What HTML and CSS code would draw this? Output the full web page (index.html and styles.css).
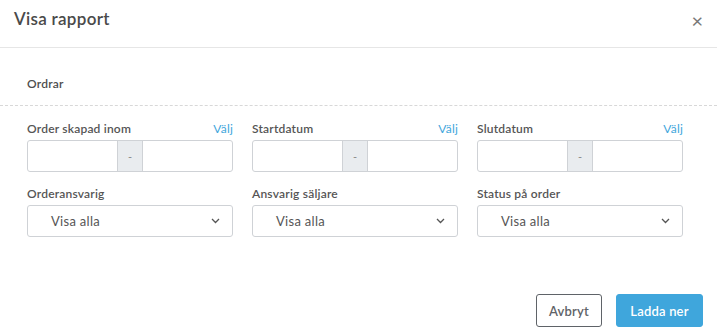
FILE: index.html
```html
<!DOCTYPE html>
<html lang="sv">
<head>
<meta charset="utf-8">
<link rel="stylesheet" href="styles.css">
</head>
<body>
<div class="modal">
  <div class="modal-header">
    <h1 class="title">Visa rapport</h1>
    <span class="close">&times;</span>
  </div>
  <div class="section-title">Ordrar</div>
  <div class="form">
    <div class="field">
      <div class="label-row"><span class="label">Order skapad inom</span><span class="pick">Välj</span></div>
      <div class="range"><span class="range-input"></span><span class="range-sep">-</span><span class="range-input"></span></div>
    </div>
    <div class="field">
      <div class="label-row"><span class="label">Startdatum</span><span class="pick">Välj</span></div>
      <div class="range"><span class="range-input"></span><span class="range-sep">-</span><span class="range-input"></span></div>
    </div>
    <div class="field">
      <div class="label-row"><span class="label">Slutdatum</span><span class="pick">Välj</span></div>
      <div class="range"><span class="range-input"></span><span class="range-sep">-</span><span class="range-input"></span></div>
    </div>
    <div class="field">
      <div class="label-row"><span class="label">Orderansvarig</span></div>
      <div class="select"><span>Visa alla</span><svg class="chev" width="9" height="6" viewBox="0 0 9 6"><path d="M1 1l3.5 3.5L8 1" fill="none" stroke="#555" stroke-width="1.3"/></svg></div>
    </div>
    <div class="field">
      <div class="label-row"><span class="label">Ansvarig säljare</span></div>
      <div class="select"><span>Visa alla</span><svg class="chev" width="9" height="6" viewBox="0 0 9 6"><path d="M1 1l3.5 3.5L8 1" fill="none" stroke="#555" stroke-width="1.3"/></svg></div>
    </div>
    <div class="field">
      <div class="label-row"><span class="label">Status på order</span></div>
      <div class="select"><span>Visa alla</span><svg class="chev" width="9" height="6" viewBox="0 0 9 6"><path d="M1 1l3.5 3.5L8 1" fill="none" stroke="#555" stroke-width="1.3"/></svg></div>
    </div>
  </div>
  <div class="footer">
    <button class="btn btn-secondary">Avbryt</button>
    <button class="btn btn-primary">Ladda ner</button>
  </div>
</div>
</body>
</html>
```
FILE: styles.css
```css
* { box-sizing: border-box; }
html, body { margin: 0; padding: 0; background: #fff; }
body { font-family: Lato, "Open Sans", sans-serif; color: #4b4b4b; }
.modal { width: 717px; height: 336px; }
.modal-header {
  height: 48px;
  border-bottom: 1px solid #e6e6e6;
  display: flex;
  align-items: center;
  justify-content: space-between;
  padding: 0 14px 0 14px;
}
.title { margin: 0; font-size: 17px; font-weight: 600; color: #4a4a4a; letter-spacing: 0.3px; padding-bottom: 10px; }
.close { font-size: 20px; color: #777; line-height: 1; padding-bottom: 8px; }
.section-title {
  height: 58px;
  padding: 28px 0 0 27px;
  font-size: 12px;
  font-weight: 600;
  color: #4d4d4d;
  letter-spacing: 0.2px;
  border-bottom: 1px dashed #d8d8d8;
}
.form {
  display: grid;
  grid-template-columns: repeat(3, 206px);
  column-gap: 19px;
  row-gap: 14px;
  padding: 15px 0 0 27px;
}
.label-row { display: flex; justify-content: space-between; align-items: baseline; height: 19px; }
.label { font-size: 12px; font-weight: 600; color: #555; letter-spacing: 0.2px; }
.pick { font-size: 12px; color: #3fa6dc; letter-spacing: 0.2px; }
.range {
  display: flex;
  height: 32px;
  border: 1px solid #cfd2d6;
  border-radius: 3px;
  overflow: hidden;
}
.range-input { flex: 1; }
.range-sep {
  width: 26px;
  background: #e9ecef;
  border-left: 1px solid #cfd2d6;
  border-right: 1px solid #cfd2d6;
  display: flex; align-items: center; justify-content: center;
  font-size: 11px; color: #888;
}
.select {
  height: 32px;
  border: 1px solid #cfd2d6;
  border-radius: 3px;
  display: flex;
  align-items: center;
  justify-content: space-between;
  padding: 0 12px 0 23px;
  font-size: 13px;
  color: #555;
  letter-spacing: 0.3px;
}
.footer {
  display: flex;
  justify-content: flex-end;
  gap: 14px;
  padding: 57px 14px 0 0;
}
.btn {
  height: 33px;
  border-radius: 3px;
  font-family: Lato, "Open Sans", sans-serif;
  font-size: 13px;
  font-weight: 600;
  letter-spacing: 0.2px;
  cursor: pointer;
}
.btn-secondary { width: 66px; background: #fff; border: 1px solid #5f6368; color: #5f6368; }
.btn-primary { width: 87px; background: #3fa6dc; border: 1px solid #3fa6dc; color: #fff; }
```
